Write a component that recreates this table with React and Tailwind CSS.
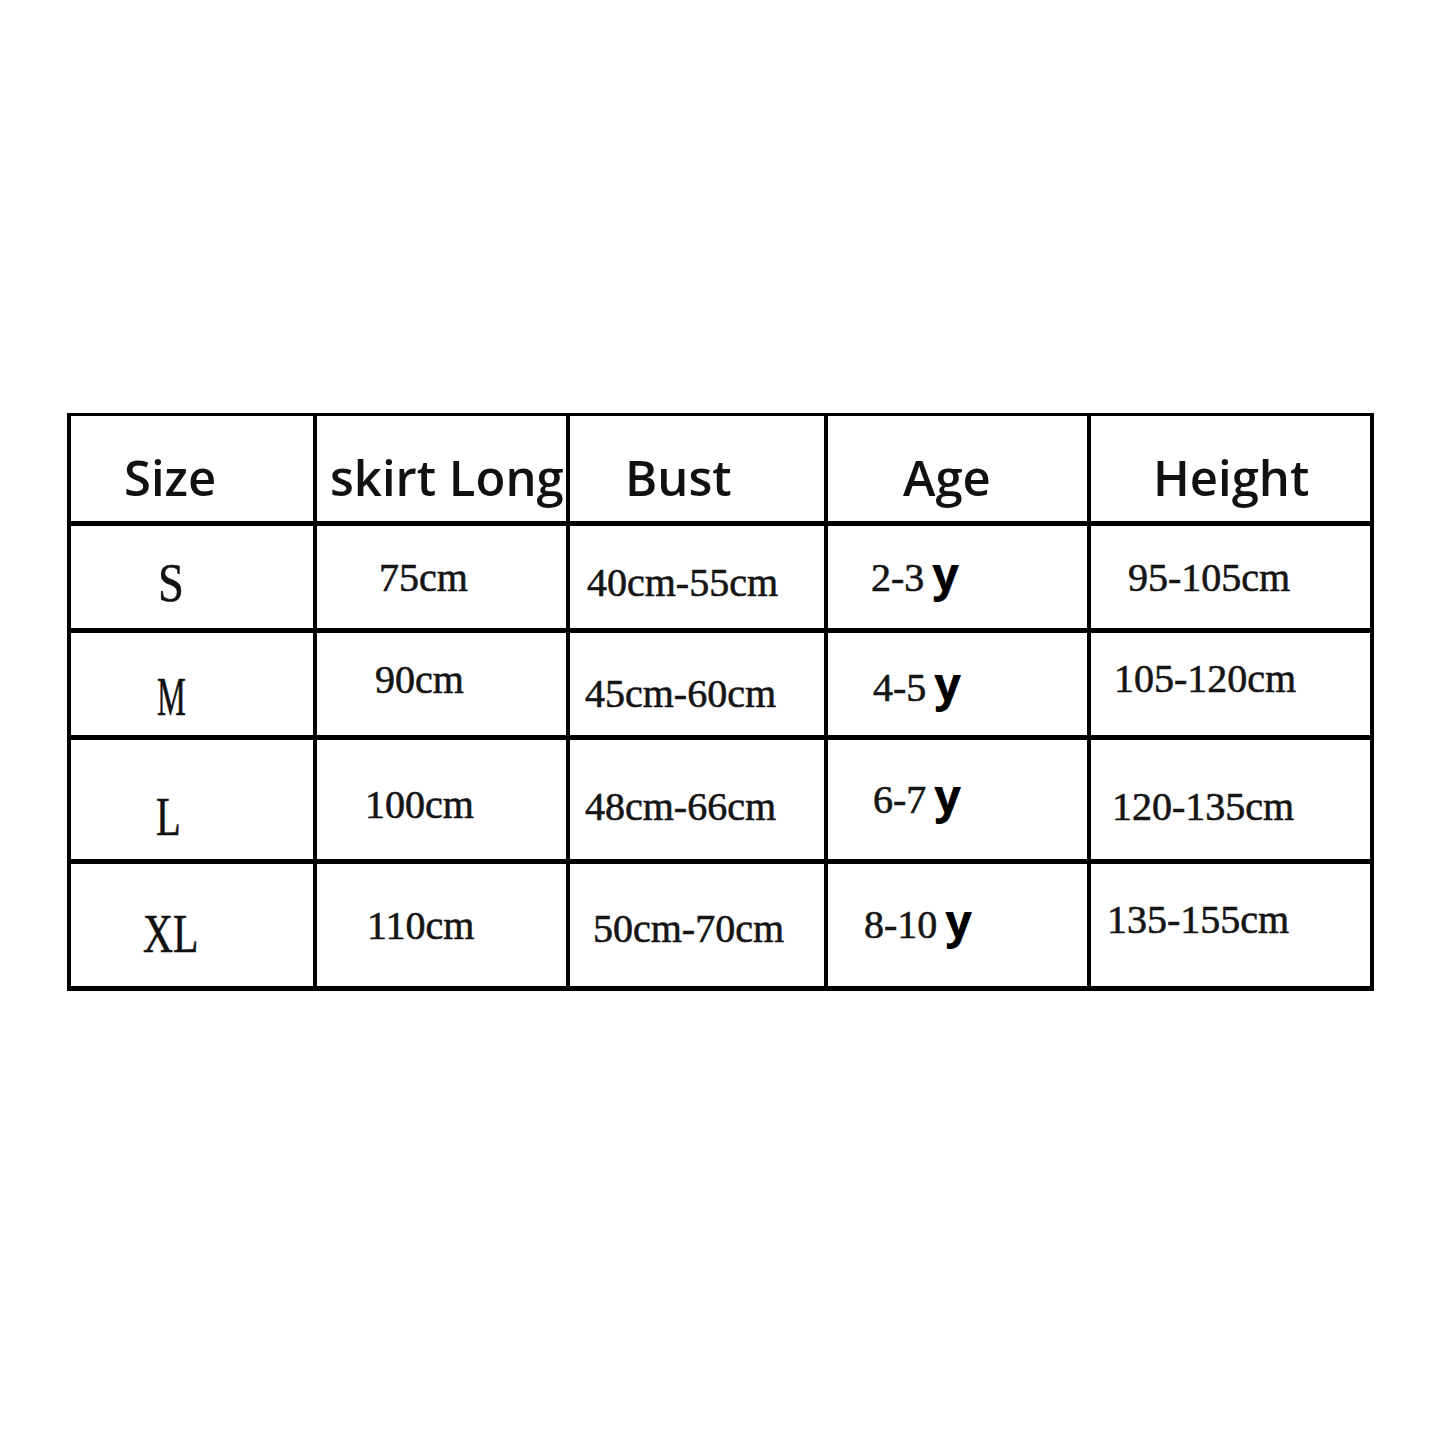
const head = [
  { label: "Size", pl: "pl-[53px]" },
  { label: "skirt Long", pl: "pl-[13px]" },
  { label: "Bust", pl: "pl-[55px]" },
  { label: "Age", pl: "pl-[75px]" },
  { label: "Height", pl: "pl-[62px]" },
];

const rows = [
  [
    { size: "S", pos: "pl-[87px] pt-[30px]", sx: "scale-x-[0.86]" },
    { text: "75cm", pos: "pl-[62px] pt-[32px]" },
    { text: "40cm-55cm", pos: "pl-[17px] pt-[37px]" },
    { text: "2-3", y: true, pos: "pl-[43px] pt-[32px]" },
    { text: "95-105cm", pos: "pl-[37px] pt-[32px]" },
  ],
  [
    { size: "M", pos: "pl-[86px] pt-[37px]", sx: "scale-x-[0.6]" },
    { text: "90cm", pos: "pl-[58px] pt-[27px]" },
    { text: "45cm-60cm", pos: "pl-[15px] pt-[41px]" },
    { text: "4-5", y: true, pos: "pl-[45px] pt-[35px]" },
    { text: "105-120cm", pos: "pl-[23px] pt-[26px]" },
  ],
  [
    { size: "L", pos: "pl-[85px] pt-[50px]", sx: "scale-x-[0.75]" },
    { text: "100cm", pos: "pl-[48px] pt-[45px]" },
    { text: "48cm-66cm", pos: "pl-[15px] pt-[47px]" },
    { text: "6-7", y: true, pos: "pl-[45px] pt-[40px]" },
    { text: "120-135cm", pos: "pl-[21px] pt-[47px]" },
  ],
  [
    { size: "XL", pos: "pl-[72px] pt-[43px]", sx: "scale-x-[0.77]" },
    { text: "110cm", pos: "pl-[50px] pt-[42px]" },
    { text: "50cm-70cm", pos: "pl-[23px] pt-[45px]" },
    { text: "8-10", y: true, pos: "pl-[36px] pt-[41px]" },
    { text: "135-155cm", pos: "pl-[16px] pt-[36px]" },
  ],
];

const serif = "font-['Liberation_Serif','Times_New_Roman',serif] [-webkit-text-stroke:0.6px_#151515]";

function Cell({ c }) {
  if (c.size) {
    return (
      <div className={`bg-white ${c.pos}`}>
        <span className={`inline-block origin-left text-[54px] leading-none text-[#111] ${serif} ${c.sx}`}>
          {c.size}
        </span>
      </div>
    );
  }
  return (
    <div className={`bg-white whitespace-nowrap text-[40px] leading-none text-[#151515] ${serif} ${c.pos}`}>
      {c.text}
      {c.y && (
        <span className="ml-[8px] font-['Open_Sans',sans-serif] text-[47px] font-bold leading-[0] text-black [-webkit-text-stroke:0px]">
          y
        </span>
      )}
    </div>
  );
}

export default function App() {
  return (
    <div className="min-h-[1445px] w-[1445px] bg-white pt-[413px]">
      <div className="ml-[67px] grid w-fit grid-cols-[242px_249px_254px_259px_279px] grid-rows-[105px_102px_102px_119px_122px] gap-x-[4px] gap-y-[5px] bg-black px-[4px] pt-[3px] pb-[5px]">
        {head.map((h) => (
          <div
            key={h.label}
            className={`bg-white whitespace-nowrap pt-[37px] font-['Open_Sans',sans-serif] text-[49px] font-semibold leading-none text-[#111] ${h.pl}`}
          >
            {h.label}
          </div>
        ))}
        {rows.map((r, i) => r.map((c, j) => <Cell key={`${i}-${j}`} c={c} />))}
      </div>
    </div>
  );
}
